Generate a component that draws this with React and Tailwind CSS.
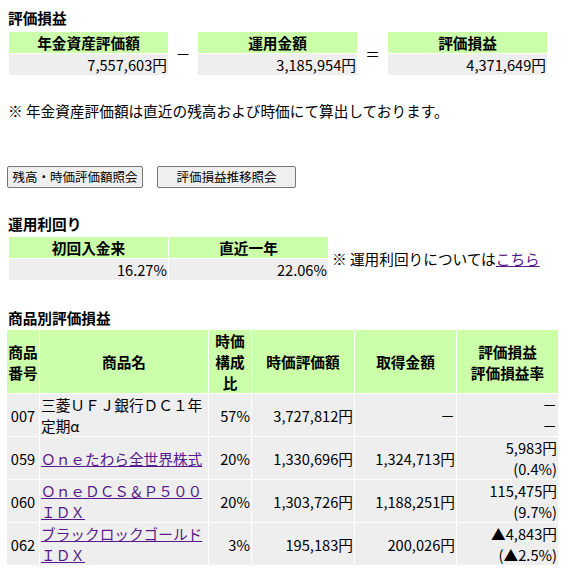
import React from "react";

const Box = ({ head, value }) => (
  <div className="w-[159px] flex flex-col gap-[1px]">
    <div className="h-[21px] bg-[#ccffaa] font-bold text-center">{head}</div>
    <div className="h-[21px] bg-[#eeeeee] text-right px-[1px]">{value}</div>
  </div>
);

const Head = ({ children }) => (
  <div className="bg-[#ccffaa] font-bold flex items-center justify-center text-center px-[1px]">{children}</div>
);

const Cell = ({ children, align = "right", className = "" }) => (
  <div
    className={`bg-[#eeeeee] flex flex-col justify-center px-[1px] ${
      align === "right" ? "items-end text-right" : align === "center" ? "items-center text-center" : "items-start text-left"
    } ${className}`}
  >
    {children}
  </div>
);

const Link = ({ children }) => <a href="#" className="text-[#551a8b] underline">{children}</a>;

const rows = [
  { no: "007", name: "三菱ＵＦＪ銀行ＤＣ１年定期α", link: false, pct: "57%", value: "3,727,812円", cost: "－", gain: "－", rate: "－" },
  { no: "059", name: "Ｏｎｅたわら全世界株式", link: true, pct: "20%", value: "1,330,696円", cost: "1,324,713円", gain: "5,983円", rate: "(0.4%)" },
  { no: "060", name: "ＯｎｅＤＣＳ＆Ｐ５００ＩＤＸ", link: true, pct: "20%", value: "1,303,726円", cost: "1,188,251円", gain: "115,475円", rate: "(9.7%)" },
  { no: "062", name: "ブラックロックゴールドＩＤＸ", link: true, pct: "3%", value: "195,183円", cost: "200,026円", gain: "▲4,843円", rate: "(▲2.5%)" },
];

export default function App() {
  return (
    <div className="w-[572px] h-[576px] bg-white text-black font-['Noto_Sans_CJK_JP',sans-serif] text-[14.67px] leading-[21px] pt-[7px] overflow-hidden">
      <div className="ml-[8px] font-bold h-[21px]">評価損益</div>

      {/* 評価損益 summary */}
      <div className="flex items-center ml-[9px] mt-[4px]">
        <Box head="年金資産評価額" value="7,557,603円" />
        <div className="w-[30px] text-center">－</div>
        <Box head="運用金額" value="3,185,954円" />
        <div className="w-[31px] text-center">＝</div>
        <Box head="評価損益" value="4,371,649円" />
      </div>

      <div className="ml-[8px] mt-[25px] h-[21px]">※ 年金資産評価額は直近の残高および時価にて算出しております。</div>

      <div className="flex gap-[14px] ml-[7px] mt-[45px]">
        <button className="w-[136px] h-[22px] bg-[#efefef] border border-[#767676] rounded-[2px] text-[12.5px] leading-[20px] text-center">
          残高・時価評価額照会
        </button>
        <button className="w-[139px] h-[22px] bg-[#efefef] border border-[#767676] rounded-[2px] text-[12.5px] leading-[20px] text-center">
          評価損益推移照会
        </button>
      </div>

      <div className="ml-[8px] mt-[25px] font-bold h-[21px]">運用利回り</div>

      <div className="flex items-center ml-[9px] mt-[3px]">
        <div className="grid grid-cols-[159px_159px] gap-[1px]">
          <div className="h-[21px] bg-[#ccffaa] font-bold text-center">初回入金来</div>
          <div className="h-[21px] bg-[#ccffaa] font-bold text-center">直近一年</div>
          <div className="h-[21px] bg-[#eeeeee] text-right px-[1px]">16.27%</div>
          <div className="h-[21px] bg-[#eeeeee] text-right px-[1px]">22.06%</div>
        </div>
        <div className="ml-[4px]">
          ※ 運用利回りについては<Link>こちら</Link>
        </div>
      </div>

      <div className="ml-[8px] mt-[27px] font-bold h-[21px]">商品別評価損益</div>

      {/* 商品別 table */}
      <div className="grid grid-cols-[32px_168px_42px_102px_101px_101px] gap-[1px] ml-[7px] mt-[2px]">
        <Head>商品番号</Head>
        <Head>商品名</Head>
        <Head>時価構成比</Head>
        <Head>時価評価額</Head>
        <Head>取得金額</Head>
        <Head>
          評価損益
          <br />
          評価損益率
        </Head>
        {rows.map((r) => (
          <React.Fragment key={r.no}>
            <Cell align="center">{r.no}</Cell>
            <Cell align="left" className="break-all">
              <div>{r.link ? <Link>{r.name}</Link> : r.name}</div>
            </Cell>
            <Cell>{r.pct}</Cell>
            <Cell>{r.value}</Cell>
            <Cell>{r.cost}</Cell>
            <Cell>
              <div>{r.gain}</div>
              <div>{r.rate}</div>
            </Cell>
          </React.Fragment>
        ))}
      </div>
    </div>
  );
}
